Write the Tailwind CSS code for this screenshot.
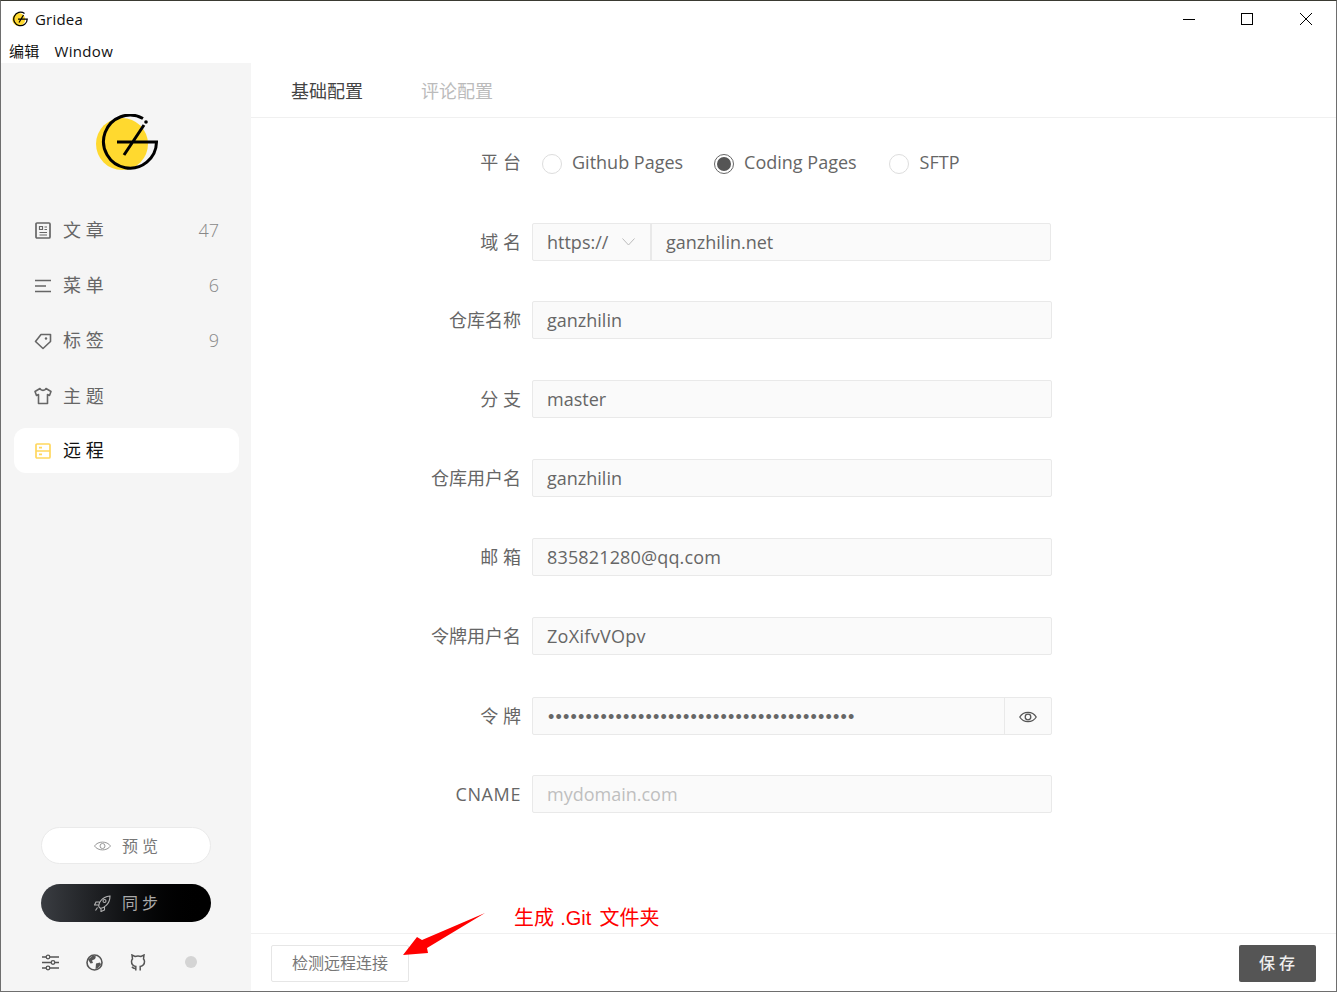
<!DOCTYPE html>
<html lang="zh">
<head>
  <meta charset="UTF-8" />
  <title>Gridea</title>
  <script src="https://cdn.jsdelivr.net/npm/@tailwindcss/browser@4"></script>
</head>
<body class="w-[1337px] h-[992px] overflow-hidden bg-white font-['Open_Sans','Noto_Sans_CJK_SC',sans-serif]">
  <div class="relative w-full h-full flex flex-col border border-[#6e6e6e] border-t-[#3a3a32] bg-white">
    <!-- title bar -->
    <div class="h-[36px] flex items-center justify-between text-[15px] tracking-[0.2px] text-[#111]">
      <div class="flex items-center pl-[11px] gap-[7px]">
        <svg width="16" height="16" viewBox="0 0 64 64">
          <circle cx="27" cy="34" r="26" fill="#ffd92f" />
          <path d="M50 10A27 27 0 1 0 61 32H24M46 16L28 46" fill="none" stroke="#000" stroke-width="5" />
        </svg>
        <span>Gridea</span>
      </div>
      <div class="flex items-center">
        <div class="w-[58px] h-[31px] flex items-center justify-center"><div class="w-3 h-px bg-black"></div></div>
        <div class="w-[58px] h-[31px] flex items-center justify-center"><div class="w-3 h-3 border border-black"></div></div>
        <div class="w-[60px] h-[31px] flex items-center justify-center">
          <svg width="12" height="12" viewBox="0 0 12 12"><path d="M0 0L12 12M12 0L0 12" stroke="#000" stroke-width="1" /></svg>
        </div>
      </div>
    </div>
    <!-- menu bar -->
    <div class="h-[26px] flex items-center gap-[15px] pl-2 pt-[2px] text-[15px] tracking-[0.3px] text-[#111]">
      <span>编辑</span>
      <span>Window</span>
    </div>

    <div class="flex-1 flex min-h-0">
      <!-- sidebar -->
      <aside class="w-[250px] bg-[#f5f5f5] flex flex-col pl-[13px] pr-[12px]">
        <div class="flex justify-center pt-[51px] pb-[38px]">
          <svg width="62" height="56" viewBox="0 0 62 56">
            <circle cx="26" cy="30" r="26" fill="#ffd92f" />
            <path d="M47 4.500A26.500 26.500 0 1 0 60.500 28H21M48 11L28 41" fill="none" stroke="#000" stroke-width="3" />
            <circle cx="50" cy="8" r="1.800" fill="#000" />
          </svg>
        </div>
        <nav class="flex flex-col gap-[10px] text-[18px] text-[#666]">
          <div class="h-[45px] flex items-center pl-[21px] pr-[20px]">
            <svg class="w-4 h-[17px] mr-[12px]" viewBox="0 0 16 17" fill="none" stroke="#666" stroke-width="1.700"><rect x="1" y="1" width="14" height="15" rx="1" /><path d="M4.500 4.500h3v3h-3zM9.500 5h2.500M9.500 7.500h2.500M4.500 10.500h7.500M4.500 13h7.500" stroke-width="1.200" /></svg>
            <span class="flex-1">文 章</span><span class="font-light text-[#888]">47</span>
          </div>
          <div class="h-[45px] flex items-center pl-[21px] pr-[20px]">
            <svg class="w-4 h-4 mr-[12px]" viewBox="0 0 16 16" fill="none" stroke="#666" stroke-width="1.600"><path d="M0 2.500h16M0 8h11M0 13.500h16" /></svg>
            <span class="flex-1">菜 单</span><span class="font-light text-[#888]">6</span>
          </div>
          <div class="h-[45px] flex items-center pl-[21px] pr-[20px]">
            <svg class="w-[18px] h-[18px] -ml-px mr-[11px]" viewBox="0 0 18 18" fill="none" stroke="#666" stroke-width="1.600"><path d="M1.500 9.500L7 2.500H16.500V9.500L9 16.500Z" stroke-linejoin="round" /><circle cx="12" cy="6.500" r="1.200" fill="#666" stroke="none" /></svg>
            <span class="flex-1">标 签</span><span class="font-light text-[#888]">9</span>
          </div>
          <div class="h-[45px] flex items-center pl-[20px] pr-[20px] pt-px">
            <svg class="w-[18px] h-[18px] mr-[11px]" viewBox="0 0 18 18" fill="none" stroke="#666" stroke-width="1.600"><path d="M6 1.500L1 4.500L2.500 8.500L4.500 7.500V16.500H13.500V7.500L15.500 8.500L17 4.500L12 1.500C11 4 7 4 6 1.500Z" stroke-linejoin="round" /></svg>
            <span class="flex-1">主 题</span>
          </div>
          <div class="h-[45px] flex items-center pl-[21px] pr-[20px] bg-white rounded-[12px] text-[#111]">
            <svg class="w-4 h-4 mr-[12px]" viewBox="0 0 16 16" fill="none" stroke="#ffd75e" stroke-width="1.700"><rect x="1" y="1" width="14" height="14" rx="1" /><path d="M1 8h14M4 4.700h3M4 11.300h3" /></svg>
            <span class="flex-1">远 程</span>
          </div>
        </nav>
        <div class="flex-1"></div>
        <div class="flex flex-col items-center pb-[19px] pr-px">
          <div class="w-[170px] h-[37px] rounded-full bg-white border border-[#eaeaea] flex items-center justify-center gap-[11px] text-[16px] text-[#777]">
            <svg width="17" height="12" viewBox="0 0 17 12" fill="none" stroke="#999" stroke-width="1"><path d="M.500 6C4 .800 13 .800 16.500 6 13 11.200 4 11.200.500 6Z" /><circle cx="8.500" cy="6" r="2.500" /></svg>
            <span>预 览</span>
          </div>
          <div class="mt-[20px] w-[170px] h-[38px] rounded-full bg-gradient-to-r from-[#3a3d42] to-black flex items-center justify-center gap-[11px] text-[16px] text-[#aaa]">
            <svg width="17" height="17" viewBox="0 0 17 17" fill="none" stroke="#b5b5b5" stroke-width="1.100"><path d="M5 12C4 9 7 2 16 1c0 9-7 12-9.500 12.500ZM5.500 7H2L.500 10H4.500M10.500 11.500V15L7 16.500V13M3.500 12.500L1.500 15.500" /><circle cx="10.500" cy="6" r="1.500" /></svg>
            <span>同 步</span>
          </div>
          <div class="mt-[30px] w-full h-[20px] flex items-center pl-[28px]">
            <svg width="17" height="17" viewBox="0 0 17 17" fill="none" stroke="#555" stroke-width="1.300"><path d="M0 3h17M0 8.500h17M0 14h17" /><circle cx="6" cy="3" r="1.800" fill="#f5f5f5" /><circle cx="11" cy="8.500" r="1.800" fill="#f5f5f5" /><circle cx="6" cy="14" r="1.800" fill="#f5f5f5" /></svg>
            <svg class="ml-[27px]" width="17" height="17" viewBox="0 0 17 17"><circle cx="8.500" cy="8.500" r="7.500" fill="none" stroke="#555" stroke-width="1.600" /><path d="M2 5.500C5 3.500 6 2 7 1.500L10 2.500 9 5 6 6.500 7 9 4.500 9.500ZM10 9.500L14 8.500 15 10.500 11.500 14.500 9.500 15Z" fill="#555" /></svg>
            <svg class="ml-[27px]" width="16" height="17" viewBox="0 0 16 17" fill="none" stroke="#555" stroke-width="1.500"><path d="M5.800 16.500V12.500C3 12 1.500 10.500 1.500 7.500 1.500 6.500 2 5.500 2.500 5L2 1 5 2.500C6.500 2 9.500 2 11 2.500L14 1 13.500 5C14 5.500 14.500 6.500 14.500 7.500 14.500 10.500 13 12 10.200 12.500V16.500M5.800 14.500C3.500 15 3 13.500 1.800 13" /></svg>
            <div class="ml-[39px] w-3 h-3 rounded-full bg-[#d4d4d4]"></div>
          </div>
        </div>
      </aside>

      <!-- main -->
      <main class="flex-1 flex flex-col min-w-0">
        <div class="h-[55px] border-b border-[#f0f0f0] flex items-center pl-[40px] pt-[3px] gap-[59px] text-[18px] text-[#aaa]">
          <span class="text-[#444] w-[71px] whitespace-nowrap">基础配置</span>
          <span class="text-[#bbb] w-[71px] whitespace-nowrap">评论配置</span>
        </div>
        <div class="flex-1 flex flex-col pt-[26px] text-[18px] text-[#666]">
          <div class="flex items-center h-[38px]">
            <label class="w-[270px] text-right mb-[2px]">平 台</label>
            <div class="ml-[21px] flex items-center">
              <span class="w-5 h-5 mt-px rounded-full border border-[#ddd] mr-[10px]"></span><span class="mr-[31px] mb-[2px]">Github Pages</span>
              <span class="w-5 h-5 mt-px rounded-full border border-[#666] p-[2px] mr-[10px]"><span class="block w-full h-full rounded-full bg-[#555]"></span></span><span class="mr-[32px] mb-[2px]">Coding Pages</span>
              <span class="w-5 h-5 mt-px rounded-full border border-[#ddd] mr-[11px]"></span><span class="mb-[2px]">SFTP</span>
            </div>
          </div>
          <div class="mt-[41px] flex items-center h-[38px]">
            <label class="w-[270px] text-right">域 名</label>
            <div class="ml-[11px] w-[519px] h-[38px] flex bg-[#fafafa] border border-[#e9e9e9] rounded-[2px]">
              <div class="w-[119px] border-r-2 border-[#e9e9e9] flex items-center justify-between pl-[14px] pr-[15px]">
                <span>https://</span>
                <svg width="13" height="8" viewBox="0 0 13 8" fill="none" stroke="#bbb" stroke-width="1"><path d="M.5.500L6.500 7 12.500.500" /></svg>
              </div>
              <div class="flex-1 flex items-center pl-[14px]">ganzhilin.net</div>
            </div>
          </div>
          <div class="mt-[40px] flex items-center h-[38px]">
            <label class="w-[270px] text-right">仓库名称</label>
            <div class="ml-[11px] w-[520px] h-[38px] flex items-center pl-[14px] bg-[#fafafa] border border-[#e9e9e9] rounded-[2px]">ganzhilin</div>
          </div>
          <div class="mt-[41px] flex items-center h-[38px]">
            <label class="w-[270px] text-right">分 支</label>
            <div class="ml-[11px] w-[520px] h-[38px] flex items-center pl-[14px] bg-[#fafafa] border border-[#e9e9e9] rounded-[2px]">master</div>
          </div>
          <div class="mt-[41px] flex items-center h-[38px]">
            <label class="w-[270px] text-right">仓库用户名</label>
            <div class="ml-[11px] w-[520px] h-[38px] flex items-center pl-[14px] bg-[#fafafa] border border-[#e9e9e9] rounded-[2px]">ganzhilin</div>
          </div>
          <div class="mt-[41px] flex items-center h-[38px]">
            <label class="w-[270px] text-right">邮 箱</label>
            <div class="ml-[11px] w-[520px] h-[38px] flex items-center pl-[14px] bg-[#fafafa] border border-[#e9e9e9] rounded-[2px] tracking-[0.15px]">835821280@qq.com</div>
          </div>
          <div class="mt-[41px] flex items-center h-[38px]">
            <label class="w-[270px] text-right">令牌用户名</label>
            <div class="ml-[11px] w-[520px] h-[38px] flex items-center pl-[14px] bg-[#fafafa] border border-[#e9e9e9] rounded-[2px] tracking-[0.3px]">ZoXifvVOpv</div>
          </div>
          <div class="mt-[42px] flex items-center h-[38px]">
            <label class="w-[270px] text-right">令 牌</label>
            <div class="ml-[11px] w-[520px] h-[38px] flex bg-[#fafafa] border border-[#e9e9e9] rounded-[2px]">
              <div class="flex-1 flex items-center pl-[15px] pt-[2px] text-[#666] text-[18px] font-['Liberation_Sans'] tracking-[1.200px]">•••••••••••••••••••••••••••••••••••••••••</div>
              <div class="w-[47px] border-l border-[#e9e9e9] flex items-center justify-center">
                <svg class="mt-px" width="18" height="14" viewBox="0 0 18 14" fill="none" stroke="#555" stroke-width="1.300"><path d="M.800 7C4.500.800 13.500.800 17.200 7 13.500 13.200 4.500 13.200.800 7Z" /><circle cx="9" cy="7" r="2.800" /></svg>
              </div>
            </div>
          </div>
          <div class="mt-[40px] flex items-center h-[38px]">
            <label class="w-[270px] text-right tracking-[0.6px]">CNAME</label>
            <div class="ml-[11px] w-[520px] h-[38px] flex items-center pl-[14px] bg-[#fafafa] border border-[#e9e9e9] rounded-[2px] text-[#bfbfbf]">mydomain.com</div>
          </div>
        </div>
        <div class="h-[58px] border-t border-[#f0f0f0] flex items-start justify-between pt-[11px] pl-[20px] pr-[20px]">
          <div class="w-[138px] h-[37px] pb-[2px] bg-white border border-[#e6e6e6] rounded-[2px] flex items-center justify-center text-[16px] text-[#777]">检测远程连接</div>
          <div class="w-[77px] h-[37px] pb-[2px] pr-px bg-[#555] rounded-[2px] flex items-center justify-center text-[16px] font-medium text-[#eee]">保 存</div>
        </div>
      </main>
    </div>

    <!-- screenshot annotation -->
    <svg class="absolute left-[398px] top-[907px]" width="90" height="50" viewBox="0 0 90 50"><path d="M4 47L18 29 23 32 86 5 28 40 29 45Z" fill="#ff0000" /></svg>
    <span class="absolute left-[513px] top-[902px] text-[20px] text-[#ff0000]">生成 <span class="ml-px mr-[3px] font-['Liberation_Sans']">.Git</span> 文件夹</span>
  </div>
</body>
</html>
